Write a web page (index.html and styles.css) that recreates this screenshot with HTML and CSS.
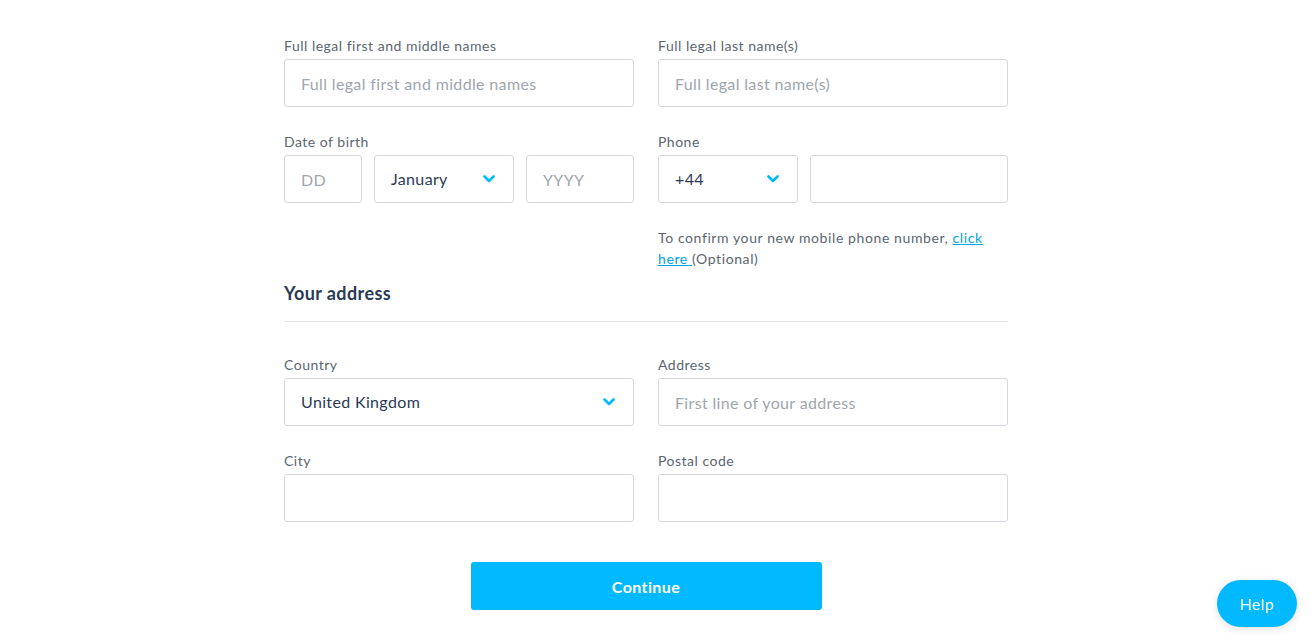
FILE: index.html
```html
<!DOCTYPE html>
<html lang="en">
<head>
<meta charset="utf-8">
<title>Personal details</title>
<link rel="stylesheet" href="styles.css">
</head>
<body>
<main class="page">
  <form class="form">
    <div class="row">
      <div class="field">
        <label class="label">Full legal first and middle names</label>
        <input class="input" type="text" placeholder="Full legal first and middle names">
      </div>
      <div class="field">
        <label class="label">Full legal last name(s)</label>
        <input class="input" type="text" placeholder="Full legal last name(s)">
      </div>
    </div>

    <div class="row">
      <div class="field">
        <label class="label">Date of birth</label>
        <div class="group dob">
          <input class="input" type="text" placeholder="DD">
          <div class="input select"><span class="value">January</span><svg class="chev" viewBox="0 0 12 8" width="12" height="8"><path d="M1.5 1.5 L6 6 L10.5 1.5" fill="none" stroke="#00b9ff" stroke-width="2.6" stroke-linecap="round" stroke-linejoin="round"/></svg></div>
          <input class="input" type="text" placeholder="YYYY">
        </div>
      </div>
      <div class="field">
        <label class="label">Phone</label>
        <div class="group phone">
          <div class="input select"><span class="value">+44</span><svg class="chev" viewBox="0 0 12 8" width="12" height="8"><path d="M1.5 1.5 L6 6 L10.5 1.5" fill="none" stroke="#00b9ff" stroke-width="2.6" stroke-linecap="round" stroke-linejoin="round"/></svg></div>
          <input class="input" type="text">
        </div>
        <p class="hint">To confirm your new mobile phone number, <a class="link" href="#">click here </a>(Optional)</p>
      </div>
    </div>

    <h2 class="section-title">Your address</h2>
    <hr class="divider">

    <div class="row">
      <div class="field">
        <label class="label">Country</label>
        <div class="input select"><span class="value">United Kingdom</span><svg class="chev" viewBox="0 0 12 8" width="12" height="8"><path d="M1.5 1.5 L6 6 L10.5 1.5" fill="none" stroke="#00b9ff" stroke-width="2.6" stroke-linecap="round" stroke-linejoin="round"/></svg></div>
      </div>
      <div class="field">
        <label class="label">Address</label>
        <input class="input" type="text" placeholder="First line of your address">
      </div>
    </div>

    <div class="row">
      <div class="field">
        <label class="label">City</label>
        <input class="input" type="text">
      </div>
      <div class="field">
        <label class="label">Postal code</label>
        <input class="input" type="text">
      </div>
    </div>

    <div class="actions">
      <button class="btn" type="button">Continue</button>
    </div>
  </form>
</main>
<button class="help" type="button">Help</button>
</body>
</html>
```
FILE: styles.css
```css
* { box-sizing: border-box; }
html, body { margin: 0; padding: 0; background: #fff; }
body {
  font-family: Lato, "Open Sans", Arial, sans-serif;
  color: #2b3a55;
  height: 644px;
  overflow: hidden;
}
.page {
  padding: 36px 24px 0 0;
}
.form {
  width: 724px;
  margin: 0 auto;
}
.row {
  display: grid;
  grid-template-columns: 350px 350px;
  column-gap: 24px;
  margin-bottom: 25px;
}
.field { display: flex; flex-direction: column; }
.label {
  font-size: 14px;
  line-height: 20px;
  letter-spacing: 0.5px;
  color: #5c6670;
  margin-bottom: 3px;
}
.input {
  display: block;
  width: 100%;
  height: 48px;
  border: 1px solid #d5d9de;
  border-radius: 3px;
  padding: 0 16px;
  font-family: inherit;
  font-size: 16px;
  letter-spacing: 0.35px;
  color: #2b3a55;
  background: #fff;
  outline: none;
}
.input::placeholder { color: #9ea6ae; }
.select {
  display: flex;
  align-items: center;
  justify-content: space-between;
}
.select .value { line-height: 20px; }
.chev { flex: none; margin-right: 2px; }
.group { display: grid; column-gap: 12px; }
.dob { grid-template-columns: 78px 140px 108px; }
.phone { grid-template-columns: 140px 198px; }
.hint {
  margin: 24px 0 0;
  font-size: 14px;
  line-height: 21px;
  letter-spacing: 0.6px;
  color: #5c6670;
}
.link { color: #00a3e6; }
.section-title {
  margin: -13px 0 0;
  font-size: 18px;
  line-height: 24px;
  font-weight: 700;
  letter-spacing: 0.4px;
  color: #2b3a55;
}
.divider {
  border: 0;
  border-top: 1px solid #e2e5e8;
  margin: 16px 0 33px;
  width: 724px;
}
.actions {
  display: flex;
  justify-content: center;
  padding-top: 15px;
}
.btn {
  width: 351px;
  height: 48px;
  border: 0;
  border-radius: 3px;
  background: #00b9ff;
  color: #fff;
  font-family: inherit;
  font-size: 16px;
  font-weight: 700;
  letter-spacing: 0.4px;
}
.help {
  position: fixed;
  right: 19px;
  bottom: 17px;
  width: 80px;
  height: 47px;
  border: 0;
  border-radius: 24px;
  background: #00b9ff;
  color: #fff;
  font-family: inherit;
  font-size: 16px;
  letter-spacing: 0.3px;
  box-shadow: 0 2px 8px rgba(0, 0, 0, 0.12);
}
```
